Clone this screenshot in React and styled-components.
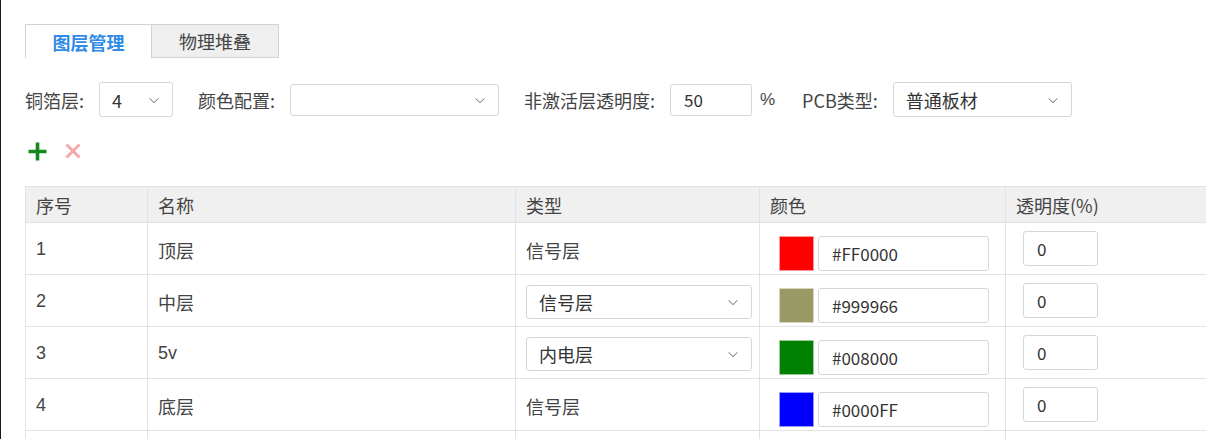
import React from "react";
import styled, { createGlobalStyle } from "styled-components";

const Global = createGlobalStyle`
  html, body { margin: 0; padding: 0; background: #fff; }
  body {
    font-family: "Liberation Sans", "Noto Sans CJK SC", sans-serif;
    color: #333;
    overflow: hidden;
  }
`;

const Page = styled.div`
  height: 439px;
  border-left: 1px solid #1a1a1a;
  padding: 24px 0 0 24px;
  box-sizing: border-box;
  overflow: hidden;
`;

const TabBar = styled.div`
  display: flex;
`;

const Tab = styled.div`
  width: 127px;
  height: 34px;
  box-sizing: border-box;
  display: flex;
  align-items: center;
  justify-content: center;
  font-family: "Noto Sans CJK SC", sans-serif;
  font-size: 18px;
  border-top: 1px solid #d2d2d2;
  border-left: ${(p) => (p.$active ? "1px solid #d2d2d2" : "none")};
  border-right: 1px solid #d2d2d2;
  border-bottom: ${(p) => (p.$active ? "none" : "1px solid #d2d2d2")};
  background: ${(p) => (p.$active ? "#fff" : "#efefef")};
  color: ${(p) => (p.$active ? "#2f8ae8" : "#444")};
  font-weight: ${(p) => (p.$active ? 700 : 400)};
`;

const Toolbar = styled.div`
  display: flex;
  align-items: center;
  margin-top: 24px;
  height: 35px;
`;

const Field = styled.div`
  display: flex;
  align-items: center;
  gap: 15px;
  margin-right: 25px;
`;

const Label = styled.span`
  font-family: "Noto Sans CJK SC", sans-serif;
  font-size: 18px;
  color: #444;
  white-space: nowrap;
`;

const SelectBox = styled.div`
  position: relative;
  display: flex;
  align-items: center;
  width: ${(p) => p.$w}px;
  height: ${(p) => p.$h || 35}px;
  box-sizing: border-box;
  border: 1px solid #d6d6d6;
  border-radius: 3px;
  background: #fff;
  padding: 0 30px 0 12px;
  font-family: "Noto Sans CJK SC", sans-serif;
  font-size: 18px;
  color: #333;
`;

const Chevron = styled.svg`
  position: absolute;
  right: 13px;
  top: 50%;
  margin-top: -2px;
  width: 10px;
  height: 5px;
`;

const TextInput = styled.div`
  display: flex;
  align-items: center;
  width: ${(p) => p.$w}px;
  height: ${(p) => p.$h || 35}px;
  box-sizing: border-box;
  border: 1px solid #d6d6d6;
  border-radius: 3px;
  background: #fff;
  padding-left: 13px;
  font-family: "Noto Sans CJK SC", sans-serif;
  font-size: 17px;
  color: #333;
`;

const Unit = styled.span`
  margin-left: -17px;
  margin-right: -3px;
  font-size: 17px;
  color: #444;
`;

const Actions = styled.div`
  display: flex;
  align-items: center;
  gap: 18px;
  margin: 25px 0 0 3px;
  height: 18px;
`;

const IconBtn = styled.svg`
  display: block;
`;

const TableWrap = styled.div`
  margin-top: 26px;
  width: 1240px;
`;

const Table = styled.table`
  border-collapse: collapse;
  table-layout: fixed;
  width: 100%;
`;

const Th = styled.th`
  height: 36px;
  padding: 0 0 0 10px;
  box-sizing: border-box;
  background: #f0f0f0;
  border: 1px solid #e2e2e2;
  text-align: left;
  font-weight: 400;
  font-family: "Noto Sans CJK SC", sans-serif;
  font-size: 18px;
  color: #444;
`;

const Td = styled.td`
  height: 52px;
  padding: ${(p) => (p.$drop ? "9px" : "2px")} 0 0 10px;
  box-sizing: border-box;
  border: 1px solid #e2e2e2;
  font-size: 18px;
  color: #444;
  vertical-align: middle;
`;

const ColorCell = styled.div`
  display: flex;
  align-items: center;
  gap: 4px;
  padding-left: 9px;
`;

const Swatch = styled.div`
  width: 35px;
  height: 35px;
  box-sizing: border-box;
  border: 1px solid rgba(255, 255, 255, 0.6);
  background: ${(p) => p.$c};
`;

const AlphaWrap = styled.div`
  padding-left: 7px;
  margin-top: -3px;
`;

const ChevronIcon = () => (
  <Chevron viewBox="0 0 10 5">
    <path d="M0.5 0.3 L5 4.6 L9.5 0.3" fill="none" stroke="#666" strokeWidth="1" />
  </Chevron>
);

const Select = ({ value, w, h }) => (
  <SelectBox $w={w} $h={h}>
    {value}
    <ChevronIcon />
  </SelectBox>
);

const layers = [
  { no: 1, name: "顶层", type: "信号层", editable: false, color: "#FF0000", alpha: 0 },
  { no: 2, name: "中层", type: "信号层", editable: true, color: "#999966", alpha: 0 },
  { no: 3, name: "5v", type: "内电层", editable: true, color: "#008000", alpha: 0 },
  { no: 4, name: "底层", type: "信号层", editable: false, color: "#0000FF", alpha: 0 },
];

export default function App() {
  return (
    <>
      <Global />
      <Page>
        <TabBar>
          <Tab $active>图层管理</Tab>
          <Tab>物理堆叠</Tab>
        </TabBar>

        <Toolbar>
          <Field>
            <Label>铜箔层:</Label>
            <Select value="4" w={74} />
          </Field>
          <Field>
            <Label>颜色配置:</Label>
            <Select value="" w={209} h={32} />
          </Field>
          <Field>
            <Label>非激活层透明度:</Label>
            <TextInput $w={82} $h={32}>50</TextInput>
          </Field>
          <Field>
            <Unit>%</Unit>
          </Field>
          <Field>
            <Label>PCB类型:</Label>
            <Select value="普通板材" w={179} />
          </Field>
        </Toolbar>

        <Actions>
          <IconBtn width="19" height="19" viewBox="0 0 19 19">
            <path d="M9.5 0.5 V18.5 M0.5 9.5 H18.5" stroke="#13891c" strokeWidth="3.6" />
          </IconBtn>
          <IconBtn width="16" height="16" viewBox="0 0 16 16">
            <path d="M1.5 1.5 L14.5 14.5 M14.5 1.5 L1.5 14.5" stroke="#f6a9a9" strokeWidth="3" />
          </IconBtn>
        </Actions>

        <TableWrap>
          <Table>
            <colgroup>
              <col style={{ width: 122 }} />
              <col style={{ width: 368 }} />
              <col style={{ width: 244 }} />
              <col style={{ width: 246 }} />
              <col />
            </colgroup>
            <thead>
              <tr>
                <Th>序号</Th>
                <Th>名称</Th>
                <Th>类型</Th>
                <Th>颜色</Th>
                <Th>透明度(%)</Th>
              </tr>
            </thead>
            <tbody>
              {layers.map((l) => (
                <tr key={l.no}>
                  <Td>{l.no}</Td>
                  <Td>{l.name}</Td>
                  <Td>
                    {l.editable ? <Select value={l.type} w={226} h={34} /> : l.type}
                  </Td>
                  <Td $drop>
                    <ColorCell>
                      <Swatch $c={l.color} />
                      <TextInput $w={171}>{l.color}</TextInput>
                    </ColorCell>
                  </Td>
                  <Td>
                    <AlphaWrap>
                      <TextInput $w={75}>{l.alpha}</TextInput>
                    </AlphaWrap>
                  </Td>
                </tr>
              ))}
              <tr>
                <Td />
                <Td />
                <Td />
                <Td />
                <Td />
              </tr>
            </tbody>
          </Table>
        </TableWrap>
      </Page>
    </>
  );
}
